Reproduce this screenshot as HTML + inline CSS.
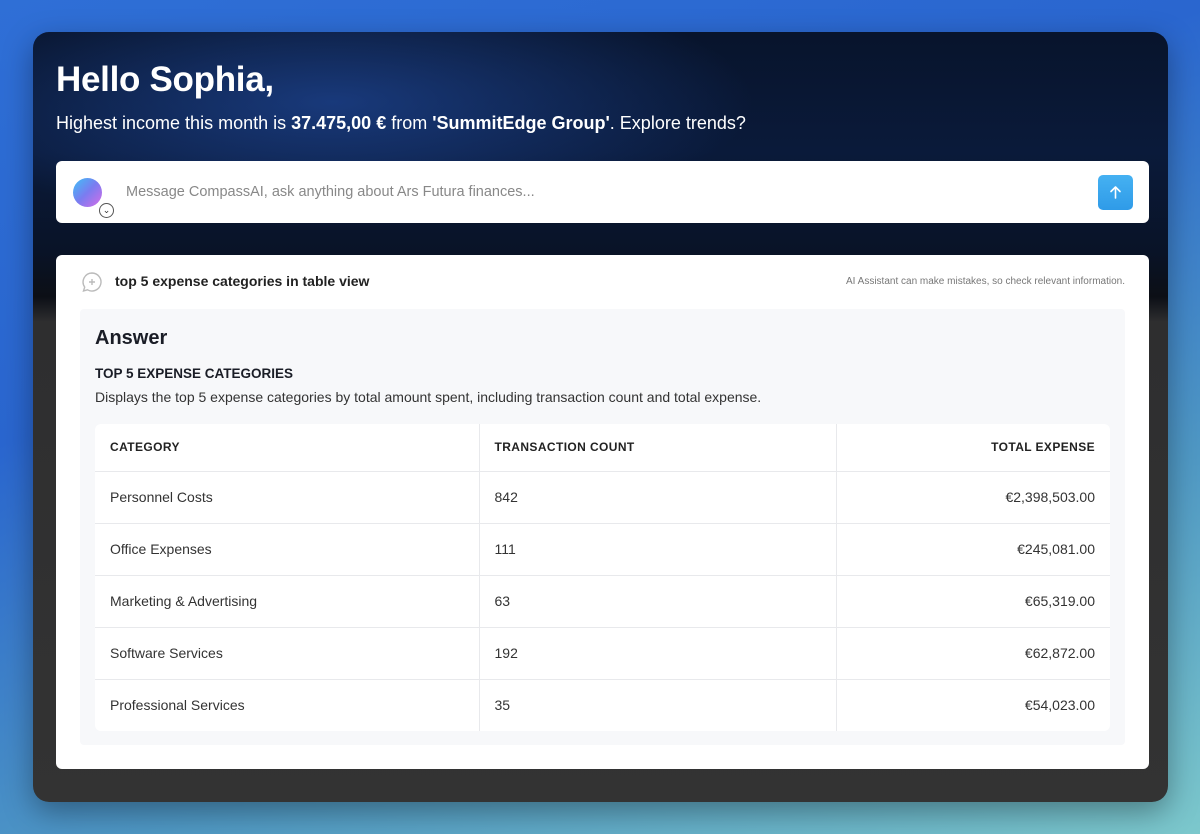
<!DOCTYPE html>
<html><head><meta charset="utf-8"><style>
*{box-sizing:border-box;margin:0;padding:0}
body{width:1200px;height:834px;overflow:hidden;font-family:"Liberation Sans",sans-serif;
background:linear-gradient(160deg,#2f6fd6 0%,#2a66cf 35%,#4f98c4 70%,#7cc8cc 100%);position:relative}
.panel{position:absolute;left:33px;top:32px;width:1135px;height:770px;border-radius:16px;overflow:hidden;
background:linear-gradient(180deg,#08142c 0px,#0a1a3a 120px,#091327 220px,#0c0f16 265px,#2e2e2f 290px,#333 100%);
box-shadow:0 10px 30px rgba(0,0,0,.35)}
.glow{position:absolute;left:0;top:0;width:100%;height:270px;
background:radial-gradient(ellipse 600px 180px at 300px 70px,rgba(35,80,170,.6),transparent 70%)}
h1{position:absolute;left:23px;top:28px;color:#fff;font-size:35px;font-weight:700;letter-spacing:-.3px}
.sub{position:absolute;left:23px;top:81px;color:#fff;font-size:18px}
.input{position:absolute;left:23px;top:129px;width:1093px;height:62px;background:#fff;border-radius:6px}
.av{position:absolute;left:17px;top:17px;width:29px;height:29px;border-radius:50%;
background:linear-gradient(135deg,#3fc0f7 0%,#7b7cf0 50%,#d66de8 100%)}
.chev{position:absolute;left:43px;top:42px;width:15px;height:15px;border:1px solid #555;border-radius:50%;background:#fff;font-size:9px;text-align:center;line-height:12px;color:#333}
.ph{position:absolute;left:70px;top:23px;color:#888;font-size:14.5px}
.send{position:absolute;right:16px;top:14px;width:35px;height:35px;border-radius:5px;background:linear-gradient(180deg,#45b1f2,#2f9be8)}
.card{position:absolute;left:23px;top:223px;width:1093px;height:514px;background:#fff;border-radius:6px}
.q{position:absolute;left:59px;top:18px;font-size:14px;font-weight:700;color:#222}
.qi{position:absolute;left:25px;top:16px}
.note{position:absolute;right:24px;top:21px;font-size:10px;color:#777}
.box{position:absolute;left:24px;top:54px;width:1045px;height:436px;background:#f7f8fa;border-radius:4px}
.ans{position:absolute;left:15px;top:18px;font-size:20px;font-weight:700;color:#1a1d26}
.t5{position:absolute;left:15px;top:57px;font-size:13.5px;font-weight:700;color:#1a1d26}
.desc{position:absolute;left:15px;top:80px;font-size:14px;color:#333}
table{position:absolute;left:15px;top:115px;width:1015px;border-collapse:collapse;background:#fff;border-radius:6px;font-size:14px;color:#333}
td,th{height:52px;padding:0 15px;border-bottom:1px solid #e8e9ec;text-align:left}
th{height:47px;font-size:12px;font-weight:700;letter-spacing:.4px;color:#222}
td:nth-child(2),th:nth-child(2){border-left:1px solid #e8e9ec;border-right:1px solid #e8e9ec;width:357px}
td:first-child,th:first-child{width:384px}
td:last-child,th:last-child{text-align:right}
tr:last-child td{border-bottom:none}
</style></head><body>
<div class="panel"><div class="glow"></div>
<h1>Hello Sophia,</h1>
<div class="sub">Highest income this month is <b>37.475,00 €</b> from <b>'SummitEdge Group'</b>. Explore trends?</div>
<div class="input"><div class="av"></div><div class="chev">⌄</div>
<div class="ph">Message CompassAI, ask anything about Ars Futura finances...</div>
<div class="send"><svg width="35" height="35" viewBox="0 0 35 35"><path d="M17.5 23V12M13 16.5l4.5-4.5 4.5 4.5" stroke="#fff" stroke-width="1.6" fill="none" stroke-linecap="round" stroke-linejoin="round"/></svg></div></div>
<div class="card">
<svg class="qi" width="22" height="22" viewBox="0 0 22 22"><path d="M11 2a9 9 0 1 1-4.5 16.8L2.5 20l1.2-3.9A9 9 0 0 1 11 2z" stroke="#bbb" stroke-width="1.4" fill="none"/><path d="M11 8v6M8 11h6" stroke="#bbb" stroke-width="1.4"/></svg>
<div class="q">top 5 expense categories in table view</div>
<div class="note">AI Assistant can make mistakes, so check relevant information.</div>
<div class="box">
<div class="ans">Answer</div>
<div class="t5">TOP 5 EXPENSE CATEGORIES</div>
<div class="desc">Displays the top 5 expense categories by total amount spent, including transaction count and total expense.</div>
<table>
<tr><th>CATEGORY</th><th>TRANSACTION COUNT</th><th>TOTAL EXPENSE</th></tr>
<tr><td>Personnel Costs</td><td>842</td><td>€2,398,503.00</td></tr>
<tr><td>Office Expenses</td><td>111</td><td>€245,081.00</td></tr>
<tr><td>Marketing &amp; Advertising</td><td>63</td><td>€65,319.00</td></tr>
<tr><td>Software Services</td><td>192</td><td>€62,872.00</td></tr>
<tr><td>Professional Services</td><td>35</td><td>€54,023.00</td></tr>
</table>
</div></div>
</div>
</body></html>
